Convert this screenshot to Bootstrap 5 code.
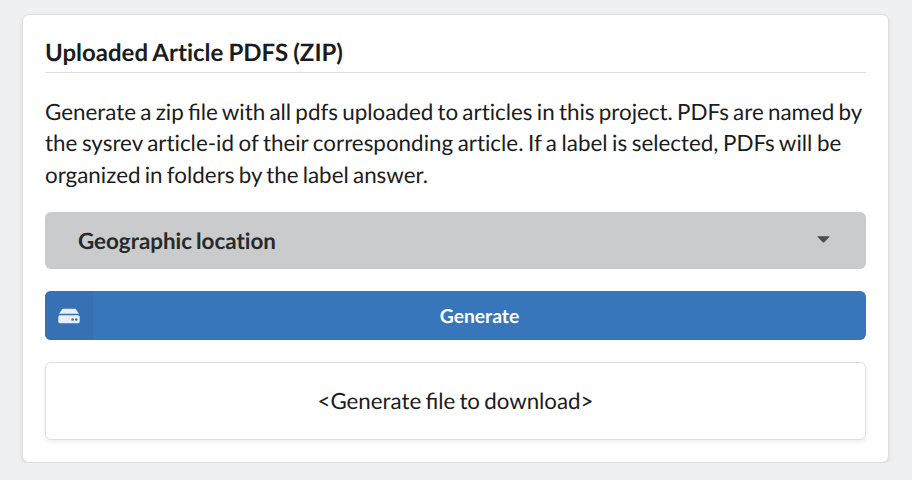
<!DOCTYPE html>
<html lang="en">
<head>
<meta charset="utf-8">
<meta name="viewport" content="width=device-width, initial-scale=1">
<title>Uploaded Article PDFS</title>
<link href="https://cdn.jsdelivr.net/npm/bootstrap@5.3.0/dist/css/bootstrap.min.css" rel="stylesheet">
<style>
body{background:#eff0f2;color:#1b1c1d;font-family:Lato,"Liberation Sans",sans-serif;font-size:22.4px;line-height:31.5px;padding:14px 23px 0 22px}
body,.btn{text-rendering:geometricPrecision;font-variant-ligatures:none;word-spacing:-1.5px}
.fi{font-variant-ligatures:common-ligatures}
.panel{height:449px;border:1px solid #dededf;border-radius:7px;padding:21px 22px 0;box-shadow:0 2px 4px rgba(34,36,38,.1);color:inherit}
.panel-title{font-size:24px;line-height:34px;height:37px;font-weight:700;border-bottom:1px solid #dedede;margin-bottom:22.7px;word-spacing:-.7px}
.panel-text{margin-bottom:21.8px;white-space:nowrap}
.line-loose{word-spacing:-1.2px}
.label-select{height:57px;background:#cacbcd;border:0;border-radius:6px;padding:0 36px 0 33px;font-size:22.4px;font-weight:700;color:#27292a;margin-bottom:22px}
.label-select svg{margin-top:-2px}
.generate{height:49px;background:#3876bb;border:0;border-radius:6px;padding:0;font-size:19.3px;font-weight:700;color:#fff;margin-bottom:22px;overflow:hidden}
.generate-icon{width:48px;background:#3571b3}
.generate-icon svg{margin-top:1px}
.generate-label{padding-top:3px}
.result{height:78px;border:1px solid #dededf;border-radius:6px;box-shadow:0 2px 4px rgba(34,36,38,.08);font-size:22.3px}
</style>
<script defer src="https://cdn.jsdelivr.net/npm/bootstrap@5.3.0/dist/js/bootstrap.bundle.min.js"></script>
</head>
<body>
<main class="card panel">
<h1 class="panel-title">Uploaded Article PDFS (ZIP)</h1>
<p class="panel-text">Generate a zip <span class="fi">fi</span>le with all pdfs uploaded to articles in this project. PDFs are named by<br><span class="line-loose">the sysrev article-id of their corresponding article. If a label is selected, PDFs will be</span><br>organized in folders by the label answer.</p>
<button class="btn label-select w-100 d-flex align-items-center justify-content-between" type="button"><span>Geographic location</span><svg width="13" height="7" viewBox="0 0 13 7" fill="#4b4c4e"><path d="M1 .2h11q.9.1.4.8L7.200 6.200q-.7.6-1.400 0L.6 1Q.1.300 1 .2z"/></svg></button>
<button class="btn generate w-100 d-flex align-items-stretch" type="button"><span class="generate-icon d-flex align-items-center justify-content-center"><svg width="22" height="16" viewBox="0 0 22 16" fill="#e8eff6"><path d="M5.300.7h11.400q.9 0 1.400.8L21 6.100q-.4-.3-1.200-.3H2.200q-.8 0-1.200.3l2.900-4.600Q4.400.7 5.300.7z"/><path fill-rule="evenodd" d="M2 7.300h18q1.700 0 1.700 1.700v4.500q0 1.700-1.700 1.700H2q-1.700 0-1.700-1.700V9Q.3 7.300 2 7.300zm12.600 2.900a1.300 1.300 0 1 0 0 2.600 1.300 1.300 0 0 0 0-2.600zm3.700 0a1.300 1.300 0 1 0 0 2.600 1.300 1.300 0 0 0 0-2.600z"/></svg></span><span class="generate-label flex-grow-1 d-flex align-items-center justify-content-center">Generate</span></button>
<div class="result d-flex align-items-center justify-content-center"><span>&lt;Generate <span class="fi">fi</span>le to download&gt;</span></div>
</main>
</body>
</html>
